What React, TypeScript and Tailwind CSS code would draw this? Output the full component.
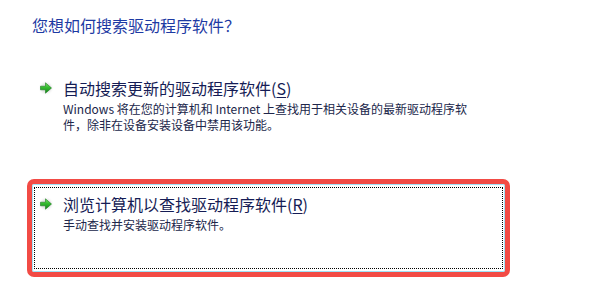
import React from "react";

const font = { fontFamily: '"Noto Sans CJK SC", "Noto Sans", sans-serif' };

function GreenArrow() {
  return (
    <svg width="16" height="16" viewBox="0 0 16 16" className="shrink-0">
      <defs>
        <radialGradient id="glow" cx="50%" cy="50%" r="50%">
          <stop offset="0%" stopColor="#c4c4c4" stopOpacity="0.9" />
          <stop offset="60%" stopColor="#dcdcdc" stopOpacity="0.6" />
          <stop offset="100%" stopColor="#ffffff" stopOpacity="0" />
        </radialGradient>
        <linearGradient id="arrowFill" x1="0" y1="0" x2="0" y2="1">
          <stop offset="0%" stopColor="#7be265" />
          <stop offset="45%" stopColor="#34bb2f" />
          <stop offset="100%" stopColor="#138319" />
        </linearGradient>
      </defs>
      <ellipse cx="8" cy="8" rx="8" ry="7.5" fill="url(#glow)" />
      <path d="M2.5 6.2 H7.5 V2.8 L13.5 8 L7.5 13.2 V9.8 H2.5 Z" fill="url(#arrowFill)" stroke="#1a7a1e" strokeWidth="0.6" strokeLinejoin="round" />
    </svg>
  );
}

function OptionText({ title, keyChar, lines }: { title: string; keyChar: string; lines: string[] }) {
  return (
    <div className="flex flex-col">
      <div className="text-[16px] leading-[20px] text-[#151c55] whitespace-nowrap">
        {title}(<span className="underline underline-offset-2">{keyChar}</span>)
      </div>
      <div className="mt-[3px] text-[12px] leading-[16px] text-[#20264a]">
        {lines.map((l, i) => (
          <div key={i} className="whitespace-nowrap">{l}</div>
        ))}
      </div>
    </div>
  );
}

export default function App() {
  return (
    <div className="w-[600px] h-[300px] bg-white overflow-hidden" style={font}>
      <div className="pt-[15px] pl-[32px] text-[16px] leading-[20px] text-[#1d3aa3]">
        您想如何搜索驱动程序软件？
      </div>

      {/* 自动搜索 */}
      <div className="mt-[43px] ml-[27px] flex items-start pl-[11px] gap-[9px]">
        <div className="mt-[2px]">
          <GreenArrow />
        </div>
        <OptionText
          title="自动搜索更新的驱动程序软件"
          keyChar="S"
          lines={[
            "Windows 将在您的计算机和 Internet 上查找用于相关设备的最新驱动程序软",
            "件，除非在设备安装设备中禁用该功能。",
          ]}
        />
      </div>

      {/* 浏览计算机 (选中) */}
      <div className="mt-[46px] ml-[27px] w-[483px] h-[98px] border-[5px] border-[#f24b45] rounded-[7px]">
        <div className="h-full border border-[#9fe2f6] rounded-[2px] px-[1px] py-[2px]">
          <div className="h-full border border-dotted border-black flex items-start pl-[3px] pt-[6px] gap-[9px]">
            <div className="mt-[2px]">
              <GreenArrow />
            </div>
            <OptionText title="浏览计算机以查找驱动程序软件" keyChar="R" lines={["手动查找并安装驱动程序软件。"]} />
          </div>
        </div>
      </div>
    </div>
  );
}
